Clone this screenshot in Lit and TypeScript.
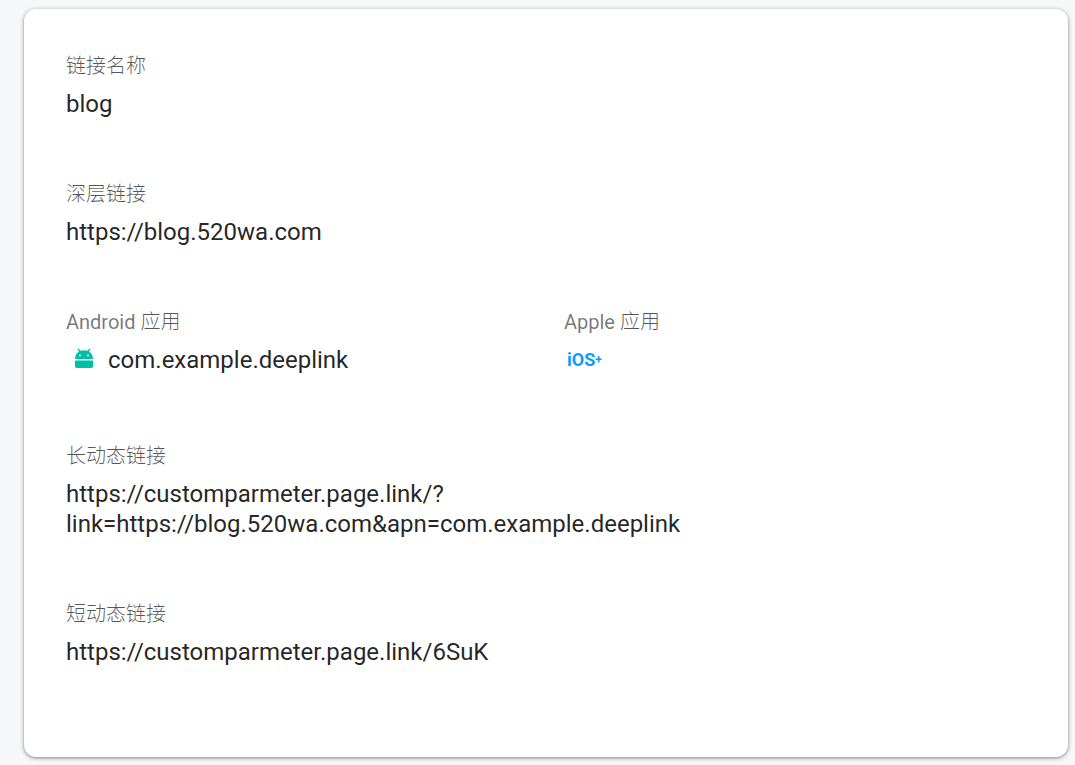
import { LitElement, html, css } from "lit";
import { customElement } from "lit/decorators.js";

@customElement("app-root")
export class AppRoot extends LitElement {
  static styles = css`
    :host {
      display: block;
      box-sizing: border-box;
      min-height: 100vh;
      padding: 9px 7px 8px 24px;
      background: #f6f7f9;
      color: rgba(0, 0, 0, 0.87);
      font: 400 24px/30px Roboto, "Noto Sans CJK SC", sans-serif;
    }
    .card {
      box-sizing: border-box;
      padding: 42px 42px 90px;
      background: #fff;
      border-radius: 12px;
      box-shadow: 0 1px 4px rgba(0, 0, 0, 0.4), 0 1px 2px rgba(0, 0, 0, 0.12);
    }
    dl {
      display: grid;
      grid-template-columns: 1fr 1fr;
      column-gap: 36px;
      row-gap: 60px;
      margin: 0;
    }
    .field {
      grid-column: 1 / -1;
    }
    .half {
      grid-column: auto;
    }
    dt {
      margin-bottom: 8px;
      color: rgba(0, 0, 0, 0.54);
      font-size: 20px;
      line-height: 30px;
    }
    .han {
      color: rgba(0, 0, 0, 0.66);
      font-weight: 300;
    }
    dd {
      margin: 0;
    }
    .app {
      display: flex;
      align-items: center;
      padding-bottom: 6px;
    }
    .android {
      flex: none;
      margin-right: 6px;
    }
    .ios {
      display: flex;
      align-items: center;
      padding-left: 3px;
      color: #0a9ff5;
      font-weight: 700;
      font-size: 18px;
    }
    .plus {
      font-size: 12px;
    }
  `;

  render() {
    return html`
      <main class="card">
        <dl>
          <div class="field"><dt><span class="han">链接名称</span></dt><dd>blog</dd></div>
          <div class="field"><dt><span class="han">深层链接</span></dt><dd>https://blog.520wa.com</dd></div>
          <div class="field half">
            <dt>Android <span class="han">应用</span></dt>
            <dd class="app">
              <svg class="android" width="36" height="30" viewBox="0 0 36 30" aria-hidden="true">
                <path
                  fill="#00bfa5"
                  d="M9 15.500h18v5.800a1.700 1.700 0 0 1-1.700 1.700H10.700A1.700 1.700 0 0 1 9 21.300zM9 14c0-3.200 1.500-6 4.200-7.500L11.400 4.300l1-.9 2.200 2.400a9.500 9.500 0 0 1 6.800 0l2.200-2.400 1 .9-1.800 2.200C25.500 8 27 10.800 27 14z"
                />
                <circle cx="14" cy="10.500" r="1" fill="#fff" />
                <circle cx="22" cy="10.500" r="1" fill="#fff" />
              </svg>
              <span>com.example.deeplink</span>
            </dd>
          </div>
          <div class="field half">
            <dt>Apple <span class="han">应用</span></dt>
            <dd class="app"><span class="ios">iOS<span class="plus">+</span></span></dd>
          </div>
          <div class="field"><dt><span class="han">长动态链接</span></dt><dd>https://customparmeter.page.link/?<br />link=https://blog.520wa.com&amp;apn=com.example.deeplink</dd></div>
          <div class="field"><dt><span class="han">短动态链接</span></dt><dd>https://customparmeter.page.link/6SuK</dd></div>
        </dl>
      </main>
    `;
  }
}
